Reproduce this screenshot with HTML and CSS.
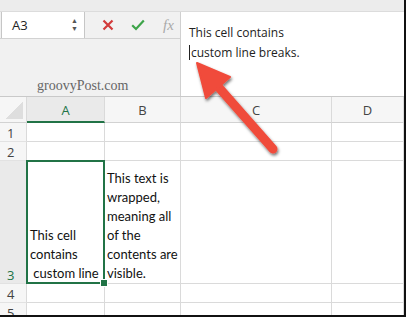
FILE: index.html
```html
<!DOCTYPE html>
<html>
<head>
<title>Line breaks</title>
<meta content="width=device-width, initial-scale=1" name="viewport" />
<link rel="stylesheet" href="styles.css">
</head>
<body>
<div class='shot'>
  <div class='topstrip'></div>

  <div class='fbar'>
    <div class='fbar-left'>
      <div class='fbar-ctrls'>
        <div class='namebox'>
          <span>A3</span>
          <span class='spin'><span>&#9650;</span><span>&#9660;</span></span>
        </div>
        <div class='btns'>
          <svg width='12' height='12' viewBox='0 0 12 12'><path d='M1.5 1.5 L10.5 10.5 M10.5 1.5 L1.5 10.5' stroke='#d23b3b' stroke-width='2.2' fill='none'/></svg>
          <svg width='14' height='12' viewBox='0 0 14 12'><path d='M1.2 6.2 L5 10 L12.8 1.6' stroke='#3da449' stroke-width='2.2' fill='none'/></svg>
          <span class='fx'>fx</span>
        </div>
      </div>
      <div class='watermark'>groovyPost.com</div>
    </div>
    <div class='ftext'>
      <div>This cell contains</div>
      <div><span class='caret'></span>custom line breaks.</div>
    </div>
  </div>

  <div class='sheet'>
    <div class='hdr corner'><span class='tri'></span></div>
    <div class='hdr colhdr sel'>A</div>
    <div class='hdr colhdr'>B</div>
    <div class='hdr colhdr'>C</div>
    <div class='hdr colhdr'>D</div>

    <div class='hdr rowhdr'>1</div>
    <div class='cell'></div><div class='cell'></div><div class='cell'></div><div class='cell'></div>

    <div class='hdr rowhdr'>2</div>
    <div class='cell'></div><div class='cell'></div><div class='cell'></div><div class='cell'></div>

    <div class='hdr rowhdr sel'>3</div>
    <div class='cell tall active'>
      <div>This cell</div>
      <div>contains</div>
      <div>&nbsp;custom line</div>
    </div>
    <div class='cell tall'>
      <div>This text is</div>
      <div>wrapped,</div>
      <div>meaning all</div>
      <div>of the</div>
      <div>contents are</div>
      <div>visible.</div>
    </div>
    <div class='cell'></div><div class='cell'></div>

    <div class='hdr rowhdr'>4</div>
    <div class='cell'></div><div class='cell'></div><div class='cell'></div><div class='cell'></div>

    <div class='hdr rowhdr'>5</div>
    <div class='cell'></div><div class='cell'></div><div class='cell'></div><div class='cell'></div>
  </div>

  <!-- annotation arrow drawn over the screenshot -->
  <svg class='arrow' width='406' height='317' viewBox='0 0 406 317'>
    <defs>
      <filter id='shd' x='-20%' y='-20%' width='140%' height='140%'>
        <feDropShadow dx='1' dy='2' stdDeviation='1.6' flood-color='#000' flood-opacity='0.55'/>
      </filter>
    </defs>
    <g filter='url(#shd)' fill='#f04b3b' stroke='#f04b3b'>
      <line x1='273' y1='149' x2='214' y2='82' stroke-width='9' stroke-linecap='round'/>
      <polygon points='197,63 230,77 206,98' stroke-width='2' stroke-linejoin='round'/>
    </g>
  </svg>
</div>
</body>
</html>
```

FILE: styles.css
```css
*, body {
  margin: 0;
  padding: 0;
  box-sizing: border-box;
}
body {
  background: #fff;
  font-family: "Lato", "Liberation Sans", sans-serif;
}
.shot {
  position: relative;
  width: 406px;
  height: 317px;
  overflow: hidden;
  border-right: 2px solid #111;
  border-bottom: 2px solid #111;
  background: #fff;
}
.topstrip {
  height: 12px;
  background: #ececec;
  border-bottom: 1px solid #dcdcdc;
}
.fbar {
  display: flex;
  height: 85px;
  border-bottom: 1px solid #c9c9c9;
}
.fbar-left {
  width: 181px;
  display: flex;
  flex-direction: column;
  background: #f1f1f1;
  border-right: 1px solid #d0d0d0;
}
.fbar-ctrls {
  display: flex;
  height: 27px;
  border-bottom: 1px solid #d2d2d2;
}
.namebox {
  width: 84px;
  margin-left: 1px;
  display: flex;
  align-items: center;
  justify-content: space-between;
  padding: 0 6px 0 10px;
  background: #fff;
  border: 1px solid #c6c6c6;
  border-top: none;
  border-bottom: none;
  font-family: "Open Sans", "Liberation Sans", sans-serif;
  font-size: 13px;
  color: #222;
}
.spin {
  display: flex;
  flex-direction: column;
  font-size: 7px;
  line-height: 8px;
  color: #555;
}
.btns {
  flex: 1;
  display: flex;
  align-items: center;
  gap: 17px;
  padding-left: 17px;
}
.fx {
  font-family: "Liberation Serif", serif;
  font-style: italic;
  font-size: 15px;
  color: #a9a9a9;
  margin-left: 1px;
}
.watermark {
  flex: 1;
  display: flex;
  align-items: flex-end;
  padding: 0 0 2px 37px;
  font-family: "Liberation Serif", serif;
  font-size: 14px;
  color: #666;
}
.ftext {
  flex: 1;
  background: #fff;
  padding: 11px 0 0 8px;
  font-family: "Open Sans", "Liberation Sans", sans-serif;
  font-size: 12px;
  line-height: 20px;
  color: #222;
}
.caret {
  display: inline-block;
  width: 1px;
  height: 15px;
  background: #222;
  vertical-align: -3px;
  margin-right: 1px;
}

.sheet {
  display: grid;
  grid-template-columns: 27px 78px 76px 151px 1fr;
  grid-template-rows: 26px 19px 19px 123px 19px 19px;
}
.hdr {
  background: #f6f6f6;
  border-right: 1px solid #dadada;
  border-bottom: 1px solid #d2d2d2;
  font-family: "Open Sans", "Liberation Sans", sans-serif;
  font-size: 13px;
  color: #444;
}
.colhdr {
  display: flex;
  align-items: center;
  justify-content: center;
  padding-top: 1px;
}
.colhdr.sel {
  background: #eaeaea;
  color: #217346;
  border-bottom: 2px solid #217346;
}
.corner {
  position: relative;
}
.tri {
  position: absolute;
  right: 3px;
  bottom: 3px;
  width: 18px;
  height: 18px;
  background: linear-gradient(to bottom right, transparent 50%, #dedede 50%);
}
.rowhdr {
  display: flex;
  align-items: flex-end;
  padding-left: 7px;
  line-height: 16px;
  border-bottom: 1px solid #e2e2e2;
}
.rowhdr.sel {
  color: #217346;
  background: #eaeaea;
}
.cell {
  border-right: 1px solid #dadada;
  border-bottom: 1px solid #dadada;
}
.tall {
  display: flex;
  flex-direction: column;
  justify-content: flex-end;
  padding: 0 0 0 2px;
  font-size: 13px;
  line-height: 19px;
  color: #111;
  white-space: pre;
}
.active {
  position: relative;
  padding-left: 3px;
}
.active::before {
  content: "";
  position: absolute;
  left: -1px;
  top: -1px;
  right: -1px;
  bottom: -1px;
  border: 2px solid #217346;
}
.active::after {
  content: "";
  position: absolute;
  right: -4px;
  bottom: -4px;
  width: 6px;
  height: 6px;
  background: #217346;
  border: 1px solid #fff;
}
.arrow {
  position: absolute;
  left: 0;
  top: 0;
}
```
